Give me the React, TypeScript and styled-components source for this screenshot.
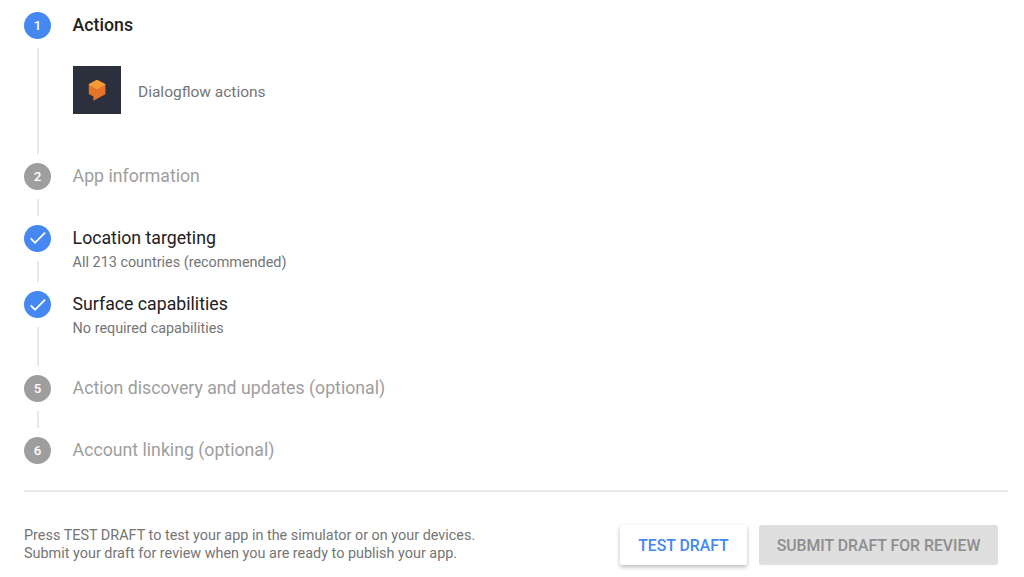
import styled, { createGlobalStyle } from 'styled-components';

type StepState = 'active' | 'done' | 'disabled';

export default function App() {
  return (
    <>
      <GlobalStyle />
      <Page>
        <Stepper>
          <Step height={150.5}>
            <Rail>
              <Badge state="active">1</Badge>
              <Connector />
            </Rail>
            <div>
              <Title state="active">
                <strong>Actions</strong>
              </Title>
              <ActionRow>
                <DialogflowTile>
                  <DialogflowLogo />
                </DialogflowTile>
                <ActionLabel>Dialogflow actions</ActionLabel>
              </ActionRow>
            </div>
          </Step>

          <Step height={62}>
            <Rail>
              <Badge state="disabled">2</Badge>
              <Connector />
            </Rail>
            <Title state="disabled">App information</Title>
          </Step>

          <Step height={66.5}>
            <Rail>
              <Badge state="done">
                <CheckIcon />
              </Badge>
              <Connector />
            </Rail>
            <div>
              <Title state="done">Location targeting</Title>
              <Summary>All 213 countries (recommended)</Summary>
            </div>
          </Step>

          <Step height={84}>
            <Rail>
              <Badge state="done">
                <CheckIcon />
              </Badge>
              <Connector />
            </Rail>
            <div>
              <Title state="done">Surface capabilities</Title>
              <Summary>No required capabilities</Summary>
            </div>
          </Step>

          <Step height={62}>
            <Rail>
              <Badge state="disabled">5</Badge>
              <Connector />
            </Rail>
            <Title state="disabled">Action discovery and updates (optional)</Title>
          </Step>

          <Step height={53}>
            <Rail>
              <Badge state="disabled">6</Badge>
            </Rail>
            <Title state="disabled">Account linking (optional)</Title>
          </Step>
        </Stepper>

        <Footer>
          <Hint>
            Press TEST DRAFT to test your app in the simulator or on your devices.
            <br />
            Submit your draft for review when you are ready to publish your app.
          </Hint>
          <Buttons>
            <TestButton type="button">TEST DRAFT</TestButton>
            <SubmitButton type="button" disabled>
              SUBMIT DRAFT FOR REVIEW
            </SubmitButton>
          </Buttons>
        </Footer>
      </Page>
    </>
  );
}

function CheckIcon() {
  return (
    <svg width="21.4" height="21.4" viewBox="0 0 24 24" fill="#fff">
      <path d="M9 16.17L4.83 12l-1.42 1.41L9 19 21 7l-1.41-1.41z" />
    </svg>
  );
}

function DialogflowLogo() {
  return (
    <svg width="18" height="22" viewBox="0 0 18 22">
      <path d="M9 0.8L17.4 5.2v10L5.4 21.8v-4.4L0.8 15V5.2z" fill="#e5732a" />
      <path d="M9 0.8L17.4 5.2v0.6L9 10.2 0.8 5.8V5.2z" fill="#f49b35" />
    </svg>
  );
}

const GlobalStyle = createGlobalStyle`
  body {
    margin: 0;
    background: #fff;
    font-family: Roboto, sans-serif;
  }
`;

const Page = styled.main`
  box-sizing: border-box;
  width: 1024px;
  height: 577px;
  padding: 12px 16px 0 24px;
  overflow: hidden;
`;

const Stepper = styled.section`
  border-bottom: 2px solid #e8e8e8;
`;

const Step = styled.div<{ height: number }>`
  display: flex;
  gap: 21.6px;
  height: ${({ height }) => height}px;
`;

const Rail = styled.div`
  display: flex;
  flex-direction: column;
  align-items: center;
  width: 27px;
`;

const Badge = styled.div<{ state: StepState }>`
  display: flex;
  flex: none;
  align-items: center;
  justify-content: center;
  width: 27px;
  height: 27px;
  border-radius: 50%;
  background: ${({ state }) => (state === 'disabled' ? '#9e9e9e' : '#4688f1')};
  color: #fff;
  font-size: 13.3px;
  font-weight: 500;
`;

const Connector = styled.div`
  flex: 1;
  width: 2px;
  margin: 9px 0 9px 1px;
  background: #e8e8e8;
`;

const Title = styled.div<{ state: StepState }>`
  color: ${({ state }) => (state === 'disabled' ? '#9e9e9e' : '#212121')};
  font-size: 17.72px;
  line-height: 26px;
  white-space: nowrap;

  strong {
    font-weight: 500;
  }
`;

const Summary = styled.div`
  margin-top: 2px;
  color: #757575;
  font-size: 14.4px;
  line-height: 20px;
`;

const ActionRow = styled.div`
  display: flex;
  align-items: center;
  gap: 17.4px;
  margin-top: 28px;
`;

const DialogflowTile = styled.div`
  display: flex;
  align-items: center;
  justify-content: center;
  width: 48px;
  height: 48px;
  background: #2b303c;
`;

const ActionLabel = styled.span`
  padding-top: 4px;
  color: #757575;
  font-size: 15.5px;
`;

const Footer = styled.footer`
  display: flex;
  align-items: center;
  justify-content: space-between;
  padding: 33px 10px 0 0;
`;

const Hint = styled.p`
  margin: 0;
  color: #757575;
  font-size: 14.42px;
  line-height: 18px;
`;

const Buttons = styled.div`
  display: flex;
  gap: 12px;
`;

const Button = styled.button`
  height: 40px;
  padding: 0;
  border: 0;
  border-radius: 2px;
  font-family: inherit;
  font-size: 15.8px;
  font-weight: 500;
`;

const TestButton = styled(Button)`
  width: 127px;
  background: #fff;
  color: #4688f1;
  box-shadow: 0 2px 4px rgba(0, 0, 0, 0.28);
`;

const SubmitButton = styled(Button)`
  width: 239px;
  background: #dfdfdf;
  color: #8e8e8e;
`;
